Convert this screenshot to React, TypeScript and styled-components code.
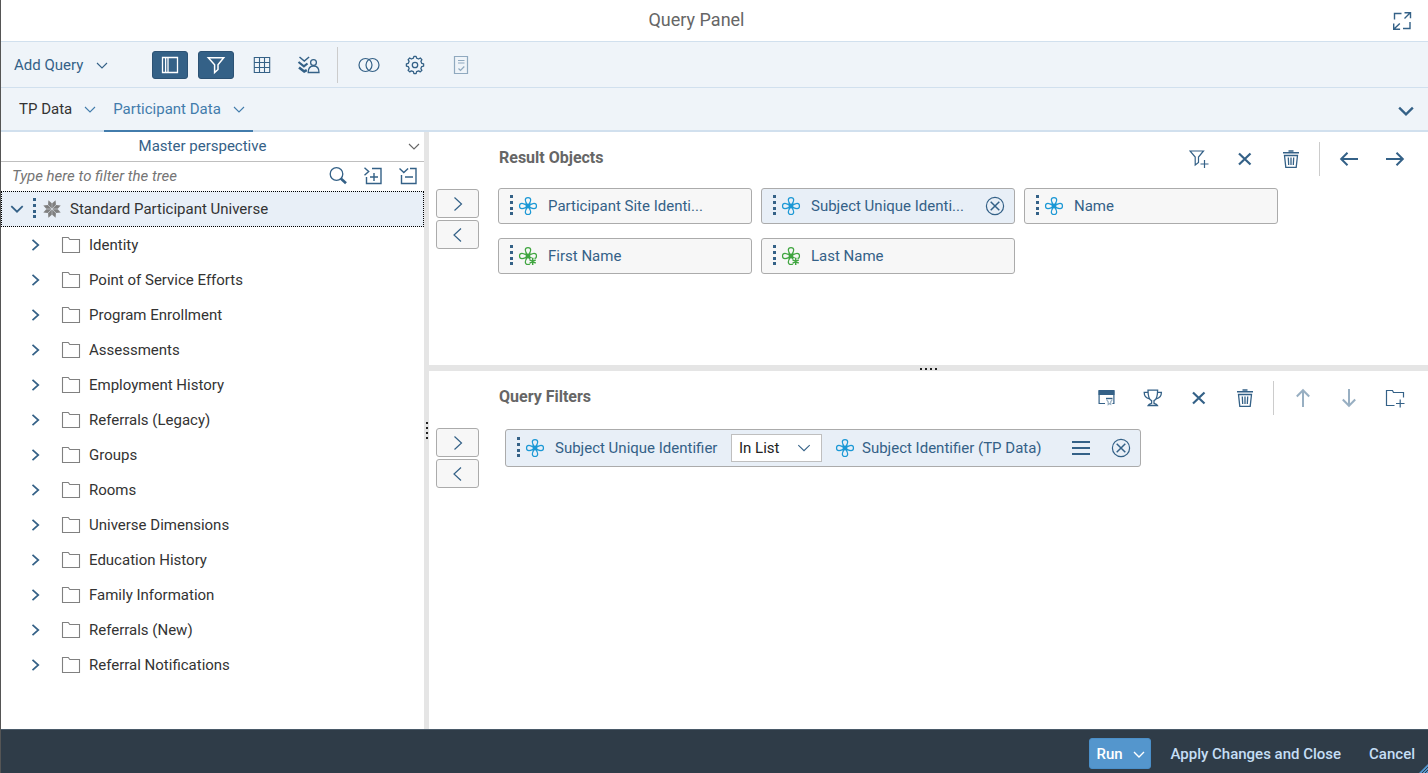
import React, { useState } from "react";
import styled, { createGlobalStyle, css } from "styled-components";

const color = {
  link: "#346187",
  brand: "#427cac",
  bar: "#eff4f9",
  barLine: "#d1e0ee",
  selected: "#e8eff7",
  text: "#333333",
  muted: "#666666",
  border: "#ababab",
  splitter: "#e5e5e5",
  chip: "#f7f7f7",
  footer: "#2f3c48",
  dimension: "#1b98d5",
  attribute: "#3fa53f",
};

const GlobalStyle = createGlobalStyle`
  *, *::before, *::after { box-sizing: border-box; }
  body {
    margin: 0;
    background: #ffffff;
    color: ${color.text};
    font-family: Roboto, "Liberation Sans", sans-serif;
    font-size: 15px;
    line-height: 20px;
  }
  button, input, select { font: inherit; color: inherit; }
  button { margin: 0; padding: 0; border: 0; background: none; cursor: pointer; }
  svg { display: block; flex: none; }
`;

/* ---------- icons ---------- */

type IconProps = { size?: number; weight?: number; children: React.ReactNode };

const Icon = ({ size = 20, weight = 1.2, children }: IconProps) => (
  <svg width={size} height={size} viewBox="0 0 20 20" fill="none" stroke="currentColor" strokeWidth={weight} aria-hidden="true">
    {children}
  </svg>
);

const ChevronDown = ({ size = 20, weight = 1.1 }: { size?: number; weight?: number }) => (
  <Icon size={size} weight={weight}><path d="M5 8l5 5 5-5" /></Icon>
);
const WideChevronDown = ({ size = 20, weight = 1.8 }: { size?: number; weight?: number }) => (
  <Icon size={size} weight={weight}><path d="M4.3 7.200l5.700 5.500 5.700-5.500" /></Icon>
);
const ChevronRight = () => <Icon weight={1.7}><path d="M6.500 4.800l5.800 5.200-5.800 5.200" /></Icon>;
const MoveRight = () => <Icon weight={1.2}><path d="M6.500 3.500l7 6.500-7 6.500" /></Icon>;
const MoveLeft = () => <Icon weight={1.2}><path d="M13 3.500L6 10l7 6.500" /></Icon>;
const ExpandIcon = () => (
  <Icon weight={1.4}>
    <path d="M2.500 8.500v-6h7M18 11v6.500h-7" />
    <path d="M12.500 7.500L18 2M12.500 1.700h6v5.500M7.800 12.400L2 18M1.700 12.500v5.800h6.400" />
  </Icon>
);
const PanelIcon = () => (
  <Icon weight={1.3}><path d="M2.500 2.500h15v15h-15zM5.600 2.500v15M8 2.500v15" /></Icon>
);
const FilterIcon = () => (
  <Icon weight={1.5}><path d="M2.300 2.700h15.400L12 9.800v4.700l-3.400 3V9.800z" /></Icon>
);
const GridIcon = () => (
  <Icon weight={1.1}><path d="M2.300 2.500h15.400v15H2.300zM7.500 2.500v15M12.500 2.500v15M2.300 7.500h15.400M2.300 12.500h15.400" /></Icon>
);
const ScopeIcon = () => (
  <svg width="24" height="20" viewBox="0 0 24 20" fill="none" stroke="currentColor" strokeWidth="1.3" aria-hidden="true">
    <path d="M3.500 2l4.800 4 4.800-4" strokeWidth="1.5" />
    <path d="M2.500 7l5.400 4.400L11.500 8.500" strokeWidth="2.200" />
    <path d="M3 12.500l5.200 4 2.600-1.400" strokeWidth="2.600" />
    <circle cx="17.500" cy="7.500" r="2.900" />
    <path d="M12.200 17.500c0-4.500 1.500-6.500 5.400-6.500s5.400 2 5.400 6.500z" />
  </svg>
);
const CombineIcon = () => (
  <svg width="22" height="20" viewBox="0 0 22 20" fill="none" stroke="currentColor" strokeWidth="1.2" aria-hidden="true">
    <circle cx="7.500" cy="10" r="6.500" />
    <circle cx="14.500" cy="10" r="6.500" />
  </svg>
);
const GearIcon = () => (
  <Icon weight={1.3}>
    <circle cx="10" cy="10" r="2.700" />
    <path d="M8.400 3.200 8.900 1.300h2.200l.5 1.900 2 .8 1.700-1 1.600 1.600-1 1.700.8 2 1.900.5v2.300l-1.900.5-.8 2 1 1.700-1.600 1.600-1.700-1-2 .8-.5 1.900H8.900l-.5-1.900-2-.8-1.700 1-1.600-1.600 1-1.700-.8-2-1.900-.5V8.800l1.900-.5.8-2-1-1.700 1.600-1.600 1.700 1z" strokeLinejoin="round" />
  </Icon>
);
const ScriptIcon = () => (
  <Icon><path d="M3.500 1.500h13v17h-13zM7 5.500h6.500M7 8h6.500M7.500 13.500l2 2 3.800-4" /></Icon>
);
const SearchIcon = () => (
  <Icon weight={1.3}>
    <circle cx="8.500" cy="8" r="6.300" />
    <path d="M12.800 12.500l5.200 4.700" strokeWidth="2.600" />
  </Icon>
);
const ExpandAllIcon = () => (
  <Icon weight={1.4}>
    <path d="M9 2.500h9v15H3.500V11M7 11h8M11 7v8" />
    <path d="M1.500 1.700L5.700 5.500 1.500 9.300" />
  </Icon>
);
const CollapseAllIcon = () => (
  <Icon weight={1.4}>
    <path d="M12 2.500h6v15H3.500V9M7 11h8" />
    <path d="M1.500 2.500l4.300 4 4.300-4" />
  </Icon>
);
const FolderIcon = () => (
  <Icon weight={1.1}><path d="M1.500 17.500v-15h5.800l1.500 2h9.700v13z" /></Icon>
);
const UniverseIcon = () => (
  <Icon weight={0}>
    {[0, 45, 90, 135, 180, 225, 270, 315].map((a) => (
      <path key={a} d="M10 9.500 8 4.600 10 .6l2 4z" fill="#7f7f7f" transform={`rotate(${a + 22.5} 10 10)`} />
    ))}
  </Icon>
);
const AddFilterIcon = () => (
  <Icon weight={1.2}>
    <path d="M1 2h13.500L9.500 8v5.500L6.200 16V8zM11.500 15h8M15.500 11v8" />
  </Icon>
);
const CrossIcon = () => <Icon weight={2.2}><path d="M4 4.500l11.500 11M15.500 4.500L4 15.500" /></Icon>;
const TrashIcon = () => (
  <Icon weight={1.3}>
    <path d="M2 3.800h16M7.500 2h5" strokeWidth="1.500" />
    <path d="M3.500 6.500h13l-1.300 11.900H4.800zM7.300 8.500l.4 7.500M10 8.500V16M12.700 8.500l-.4 7.500" />
  </Icon>
);
const ArrowIcon = ({ turn = 0 }: { turn?: number }) => (
  <Icon weight={2}><path d="M19 10H2.500M8.500 3.800L2.200 10l6.300 6.200" transform={`rotate(${turn} 10 10)`} /></Icon>
);
const SubqueryIcon = () => (
  <Icon weight={1.2}>
    <path d="M1.500 2h16v5h-16z" fill="currentColor" stroke="none" />
    <path d="M8 15.500H2.100V3h14.800v12.500h-1.500" />
    <path d="M9 10.500h6.500" strokeWidth="1.400" />
    <path d="M9.500 11.500l1.700 2.300v2.700l1.300-1 1.200.8v-2.500l1.600-2.300" opacity=".5" />
  </Icon>
);
const TrophyIcon = () => (
  <Icon weight={1.3}>
    <path d="M5 2.200h9.600c0 5.500-1.200 9.500-3.600 10.500v2.600c2 .4 3 1 3.500 2.200H5.100c.5-1.200 1.500-1.800 3.500-2.200v-2.600C6.200 11.700 5 7.700 5 2.200z" />
    <path d="M5 4.300H1.200c0 4 1.900 6 5.300 6.500M14.600 4.300h3.800c0 4-1.900 6-5.300 6.500" />
  </Icon>
);
const FolderPlusIcon = () => (
  <Icon weight={1.2}><path d="M9.500 17.500h-8v-15h6l1 2h10v5M11 15.500h8.500M15.200 11.500v8" /></Icon>
);
const MenuIcon = () => <Icon weight={1.8}><path d="M1 4h18M1 10h18M1 16h18" /></Icon>;
const RemoveIcon = () => (
  <Icon weight={1.2}>
    <circle cx="10" cy="10" r="8.600" />
    <path d="M5.700 5.700l8.600 8.600M14.300 5.700l-8.600 8.600" strokeWidth="1.500" />
  </Icon>
);
const DragDots = () => (
  <svg width="4" height="22" viewBox="0 0 4 22" aria-hidden="true">
    {[0, 6, 12, 17].map((y) => <rect key={y} x="0" y={y} width="3" height="3" fill={color.link} />)}
  </svg>
);

const petal = "M10 9.500C8.600 7.800 7.300 6 7.300 4c0-3.300 5.400-3.300 5.400 0 0 2-1.300 3.800-2.700 5.500z";
const DimensionIcon = ({ attribute = false }: { attribute?: boolean }) => {
  const tint = attribute ? color.attribute : color.dimension;
  return (
    <svg width="20" height="20" viewBox="0 0 20 20" fill="none" stroke={tint} strokeWidth="1.2" aria-hidden="true">
      {[0, 90, 180, 270].map((a) => <path key={a} d={petal} transform={`rotate(${a} 10 10)`} />)}
      <circle cx="10" cy="10" r="1.600" fill={tint} />
      <path d="M7.500 7.500l5 5M12.500 7.500l-5 5" />
      {attribute && (
        <>
          <circle cx="14.700" cy="15.500" r="3.600" fill={color.chip} stroke="none" />
          <path d="M14.700 12v7M11.700 13.800l6 3.400M17.700 13.800l-6 3.400" strokeWidth="1.500" />
        </>
      )}
    </svg>
  );
};

/* ---------- frame ---------- */

const Page = styled.div`
  display: flex;
  flex-direction: column;
  min-height: 100vh;
  border-left: 1px solid #555555;
`;

const TitleBar = styled.header`
  display: flex;
  align-items: center;
  min-height: 42px;
  border-bottom: 1px solid ${color.barLine};
`;

const Title = styled.h1`
  flex: 1;
  margin: 0;
  padding-bottom: 2px;
  text-align: center;
  font-size: 18px;
  font-weight: 400;
  color: ${color.muted};
`;

const ExpandButton = styled.button`
  width: 36px;
  color: ${color.link};
`;

const Toolbar = styled.div`
  display: flex;
  align-items: center;
  gap: 10px;
  min-height: 46px;
  padding: 0 13px;
  background: ${color.bar};
  border-bottom: 1px solid ${color.barLine};
`;

const AddQuery = styled.button`
  display: flex;
  align-items: center;
  gap: 9px;
  width: 128px;
  color: ${color.link};
`;

const ToolButton = styled.button<{ $on?: boolean }>`
  display: flex;
  align-items: center;
  justify-content: center;
  width: 36px;
  height: 28px;
  border-radius: 3px;
  color: ${color.link};
  ${(p) => p.$on && css`
    color: #ffffff;
    background: ${color.link};
    border: 1px solid #2c5274;
  `}
  &:disabled { opacity: 0.5; }
`;

const Divider = styled.span`
  width: 1px;
  height: 36px;
  background: #cccccc;
`;

const ToolDivider = styled(Divider)`
  margin: 0 3px 0 1px;
`;

const TabBar = styled.div`
  display: flex;
  align-items: stretch;
  min-height: 44px;
  padding: 0 10px 0 9px;
  background: ${color.bar};
  box-shadow: inset 0 -2px ${color.barLine};
`;

const Tab = styled.button<{ $active?: boolean }>`
  display: flex;
  align-items: center;
  gap: 8px;
  padding: 0 4px 0 9px;
  border-bottom: 2px solid ${(p) => (p.$active ? color.brand : "transparent")};
  color: ${(p) => (p.$active ? color.brand : color.text)};
  svg { color: ${color.brand}; }
`;

const TabOverflow = styled.button`
  margin-left: auto;
  padding-top: 2px;
  color: ${color.link};
`;

const Body = styled.main`
  display: flex;
  flex: 1;
`;

/* ---------- universe tree ---------- */

const Sidebar = styled.aside`
  flex: 0 0 423px;
`;

const Perspective = styled.button`
  display: flex;
  align-items: center;
  width: 100%;
  height: 30px;
  padding-bottom: 2px;
  border-bottom: 1px solid #bfbfbf;
  color: ${color.link};
  span { flex: 1; }
  svg { color: ${color.muted}; }
`;

const FilterRow = styled.div`
  display: flex;
  align-items: center;
  height: 29px;
  padding: 0 6px 2px 0;
  color: ${color.link};
`;

const FilterInput = styled.input`
  flex: 1;
  min-width: 0;
  padding: 0 11px;
  border: 0;
  outline: 0;
  background: none;
  font-style: italic;
  &::placeholder { color: #757575; opacity: 1; }
`;

const FilterActions = styled.div`
  display: flex;
  gap: 15px;
`;

const Tree = styled.ul`
  margin: 0;
  padding: 0;
  list-style: none;
`;

const Root = styled.button`
  display: flex;
  align-items: center;
  width: 100%;
  height: 36px;
  padding-left: 5px;
  border: 1px dotted #000000;
  background: ${color.selected};
  color: ${color.link};
`;

const RootLabel = styled.span`
  padding-left: 8px;
  color: ${color.text};
`;

const RootMark = styled.span`
  display: flex;
  align-items: center;
  gap: 5px;
  padding-left: 6px;
`;

const Branch = styled.button`
  display: flex;
  align-items: center;
  width: 100%;
  height: 35px;
  padding-left: 25px;
  color: ${color.link};
`;

const BranchLabel = styled.span`
  display: flex;
  align-items: center;
  gap: 8px;
  padding-left: 15px;
  color: ${color.text};
  svg { color: #808080; }
`;

/* ---------- splitters ---------- */

const Splitter = styled.div<{ $vertical?: boolean }>`
  display: flex;
  align-items: center;
  justify-content: center;
  background: ${color.splitter};
  ${(p) => (p.$vertical ? css`width: 5px; flex: none;` : css`height: 6px;`)}
`;

const Grip = ({ vertical = false }: { vertical?: boolean }) => (
  <svg width={vertical ? 3 : 17} height={vertical ? 17 : 3} aria-hidden="true">
    {[0, 5, 10, 15].map((n) => (
      <rect key={n} x={vertical ? 1 : n} y={vertical ? n : 1} width="2" height="2" fill="#222222" />
    ))}
  </svg>
);

/* ---------- panes ---------- */

const Workspace = styled.div`
  display: flex;
  flex: 1;
  flex-direction: column;
  min-width: 0;
`;

const Pane = styled.section<{ $grow?: boolean }>`
  min-height: 233px;
  ${(p) => p.$grow && css`flex: 1;`}
`;

const PaneHeader = styled.div`
  display: flex;
  align-items: center;
  height: 54px;
  padding: 0 10px 0 70px;
`;

const PaneTitle = styled.h2`
  flex: 1;
  margin: 0;
  padding-bottom: 2px;
  font-size: 16px;
  font-weight: 700;
  color: ${color.muted};
`;

const PaneTools = styled.div`
  display: flex;
  align-items: center;
`;

const PaneTool = styled.button`
  display: flex;
  align-items: center;
  justify-content: center;
  width: 46px;
  height: 34px;
  color: ${color.link};
  &:disabled { opacity: 0.5; }
`;

const PaneDivider = styled(Divider)`
  height: 34px;
  margin: 0 6px 0 5px;
`;

const PaneBody = styled.div`
  display: flex;
  align-items: flex-start;
  gap: 19px;
  padding: 2px 10px 0 7px;
`;

const Movers = styled.div`
  display: grid;
  gap: 2px;
  padding-top: 1px;
`;

const MoveButton = styled.button`
  display: flex;
  align-items: center;
  justify-content: center;
  width: 43px;
  height: 29px;
  border: 1px solid ${color.border};
  border-radius: 3px;
  background: ${color.chip};
  color: ${color.link};
`;

const ObjectList = styled.div`
  display: flex;
  flex: 1;
  flex-wrap: wrap;
  gap: 14px 9px;
`;

const ObjectChip = styled.div<{ $selected?: boolean }>`
  display: flex;
  align-items: center;
  width: 254px;
  height: 36px;
  padding: 0 9px 0 11px;
  border: 1px solid ${color.border};
  border-radius: 3px;
  background: ${(p) => (p.$selected ? color.selected : color.chip)};
  color: ${color.link};
`;

const ChipMark = styled.span`
  display: flex;
  align-items: center;
  gap: 4px;
`;

const ChipLabel = styled.span`
  flex: 1;
  overflow: hidden;
  padding-left: 10px;
  white-space: nowrap;
`;

const FilterList = styled.div`
  flex: 1;
  padding: 2px 0 0 7px;
`;

const FilterChip = styled.div`
  display: inline-flex;
  align-items: center;
  height: 38px;
  padding: 0 9px 0 11px;
  border: 1px solid ${color.border};
  border-radius: 3px;
  background: ${color.selected};
  color: ${color.link};
`;

const FilterField = styled.span`
  width: 167px;
  margin: 0 9px 0 10px;
  white-space: nowrap;
`;

const FilterOperand = styled.span`
  width: 184px;
  margin: 0 25px 0 7px;
  white-space: nowrap;
`;

const OperatorBox = styled.span`
  position: relative;
  margin-right: 13px;
  svg {
    position: absolute;
    top: 4px;
    right: 8px;
    pointer-events: none;
  }
`;

const Operator = styled.select`
  display: block;
  width: 91px;
  height: 28px;
  padding: 0 7px;
  border: 1px solid #bfbfbf;
  border-radius: 0;
  background: #ffffff;
  color: #222222;
  appearance: none;
`;

const FilterActionsEnd = styled.span`
  display: flex;
  gap: 20px;
`;

/* ---------- footer ---------- */

const Footer = styled.footer`
  position: relative;
  display: flex;
  align-items: center;
  justify-content: flex-end;
  height: 44px;
  padding: 4px 13px 0 0;
  border-top: 1px solid #4a5a69;
  background: ${color.footer};
  font-weight: 500;
`;

const RunButton = styled.button`
  display: flex;
  align-items: center;
  justify-content: space-between;
  width: 62px;
  height: 31px;
  margin-right: 19px;
  padding: 0 1px 0 6px;
  border: 1px solid #4a8fc9;
  border-radius: 3px;
  background: #5496cd;
  color: #ffffff;
  font-weight: 500;
`;

const FooterActions = styled.div`
  display: flex;
  gap: 28px;
`;

const FooterButton = styled.button`
  color: #c5def5;
  font-weight: 500;
`;

const Resizer = styled.span`
  position: absolute;
  right: 0;
  bottom: 0;
`;

const folders = [
  "Identity",
  "Point of Service Efforts",
  "Program Enrollment",
  "Assessments",
  "Employment History",
  "Referrals (Legacy)",
  "Groups",
  "Rooms",
  "Universe Dimensions",
  "Education History",
  "Family Information",
  "Referrals (New)",
  "Referral Notifications",
];

const objects = [
  { label: "Participant Site Identi..." },
  { label: "Subject Unique Identi...", selected: true },
  { label: "Name" },
  { label: "First Name", attribute: true },
  { label: "Last Name", attribute: true },
];

const MoveButtons = ({ target }: { target: string }) => (
  <Movers>
    <MoveButton aria-label={`Add to ${target}`}><MoveRight /></MoveButton>
    <MoveButton aria-label={`Remove from ${target}`}><MoveLeft /></MoveButton>
  </Movers>
);

export default function App() {
  const [filter, setFilter] = useState("");
  const shown = folders.filter((f) => f.toLowerCase().includes(filter.toLowerCase()));

  return (
    <>
      <GlobalStyle />
      <Page>
        <TitleBar>
          <Title>Query Panel</Title>
          <ExpandButton aria-label="Maximize"><ExpandIcon /></ExpandButton>
        </TitleBar>

        <Toolbar>
          <AddQuery>Add Query <ChevronDown /></AddQuery>
          <ToolButton $on aria-label="Universe outline"><PanelIcon /></ToolButton>
          <ToolButton $on aria-label="Filters pane"><FilterIcon /></ToolButton>
          <ToolButton aria-label="Data preview"><GridIcon /></ToolButton>
          <ToolButton aria-label="Scope of analysis"><ScopeIcon /></ToolButton>
          <ToolDivider />
          <ToolButton aria-label="Combined queries"><CombineIcon /></ToolButton>
          <ToolButton aria-label="Query properties"><GearIcon /></ToolButton>
          <ToolButton aria-label="View script" disabled><ScriptIcon /></ToolButton>
        </Toolbar>

        <TabBar>
          <Tab>TP Data <ChevronDown /></Tab>
          <Tab $active>Participant Data <ChevronDown /></Tab>
          <TabOverflow aria-label="All queries"><WideChevronDown size={24} weight={2} /></TabOverflow>
        </TabBar>

        <Body>
          <Sidebar>
            <Perspective><span>Master perspective</span><ChevronDown /></Perspective>
            <FilterRow>
              <FilterInput
                aria-label="Filter the tree"
                placeholder="Type here to filter the tree"
                value={filter}
                onChange={(e) => setFilter(e.target.value)}
              />
              <FilterActions>
                <button aria-label="Search"><SearchIcon /></button>
                <button aria-label="Expand all"><ExpandAllIcon /></button>
                <button aria-label="Collapse all"><CollapseAllIcon /></button>
              </FilterActions>
            </FilterRow>
            <Root>
              <WideChevronDown />
              <RootMark><DragDots /><UniverseIcon /></RootMark>
              <RootLabel>Standard Participant Universe</RootLabel>
            </Root>
            <Tree>
              {shown.map((name) => (
                <li key={name}>
                  <Branch>
                    <ChevronRight />
                    <BranchLabel><FolderIcon />{name}</BranchLabel>
                  </Branch>
                </li>
              ))}
            </Tree>
          </Sidebar>

          <Splitter $vertical><Grip vertical /></Splitter>

          <Workspace>
            <Pane>
              <PaneHeader>
                <PaneTitle>Result Objects</PaneTitle>
                <PaneTools>
                  <PaneTool aria-label="Add filter"><AddFilterIcon /></PaneTool>
                  <PaneTool aria-label="Remove"><CrossIcon /></PaneTool>
                  <PaneTool aria-label="Remove all"><TrashIcon /></PaneTool>
                  <PaneDivider />
                  <PaneTool aria-label="Move left"><ArrowIcon /></PaneTool>
                  <PaneTool aria-label="Move right"><ArrowIcon turn={180} /></PaneTool>
                </PaneTools>
              </PaneHeader>
              <PaneBody>
                <MoveButtons target="result objects" />
                <ObjectList>
                  {objects.map((o) => (
                    <ObjectChip key={o.label} $selected={o.selected}>
                      <ChipMark><DragDots /><DimensionIcon attribute={o.attribute} /></ChipMark>
                      <ChipLabel>{o.label}</ChipLabel>
                      {o.selected && <button aria-label="Remove object"><RemoveIcon /></button>}
                    </ObjectChip>
                  ))}
                </ObjectList>
              </PaneBody>
            </Pane>

            <Splitter><Grip /></Splitter>

            <Pane $grow>
              <PaneHeader>
                <PaneTitle>Query Filters</PaneTitle>
                <PaneTools>
                  <PaneTool aria-label="Add subquery"><SubqueryIcon /></PaneTool>
                  <PaneTool aria-label="Add ranking"><TrophyIcon /></PaneTool>
                  <PaneTool aria-label="Remove"><CrossIcon /></PaneTool>
                  <PaneTool aria-label="Remove all"><TrashIcon /></PaneTool>
                  <PaneDivider />
                  <PaneTool aria-label="Move up" disabled><ArrowIcon turn={90} /></PaneTool>
                  <PaneTool aria-label="Move down" disabled><ArrowIcon turn={270} /></PaneTool>
                  <PaneTool aria-label="Add nested filter"><FolderPlusIcon /></PaneTool>
                </PaneTools>
              </PaneHeader>
              <PaneBody>
                <MoveButtons target="query filters" />
                <FilterList>
                  <FilterChip>
                    <ChipMark><DragDots /><DimensionIcon /></ChipMark>
                    <FilterField>Subject Unique Identifier</FilterField>
                    <OperatorBox>
                      <Operator aria-label="Operator" defaultValue="In List">
                        <option>In List</option>
                        <option>Equal to</option>
                      </Operator>
                      <WideChevronDown weight={1.1} />
                    </OperatorBox>
                    <DimensionIcon />
                    <FilterOperand>Subject Identifier (TP Data)</FilterOperand>
                    <FilterActionsEnd>
                      <button aria-label="Operand type"><MenuIcon /></button>
                      <button aria-label="Remove filter"><RemoveIcon /></button>
                    </FilterActionsEnd>
                  </FilterChip>
                </FilterList>
              </PaneBody>
            </Pane>
          </Workspace>
        </Body>

        <Footer>
          <RunButton>Run <ChevronDown weight={1.4} /></RunButton>
          <FooterActions>
            <FooterButton>Apply Changes and Close</FooterButton>
            <FooterButton>Cancel</FooterButton>
          </FooterActions>
          <Resizer>
            <svg width="9" height="9" viewBox="0 0 9 9" aria-hidden="true">
              <path d="M9 0v9H0z" fill="#5496cd" />
              <path d="M9 3L3 9M9 6L6 9" stroke={color.footer} />
            </svg>
          </Resizer>
        </Footer>
      </Page>
    </>
  );
}
